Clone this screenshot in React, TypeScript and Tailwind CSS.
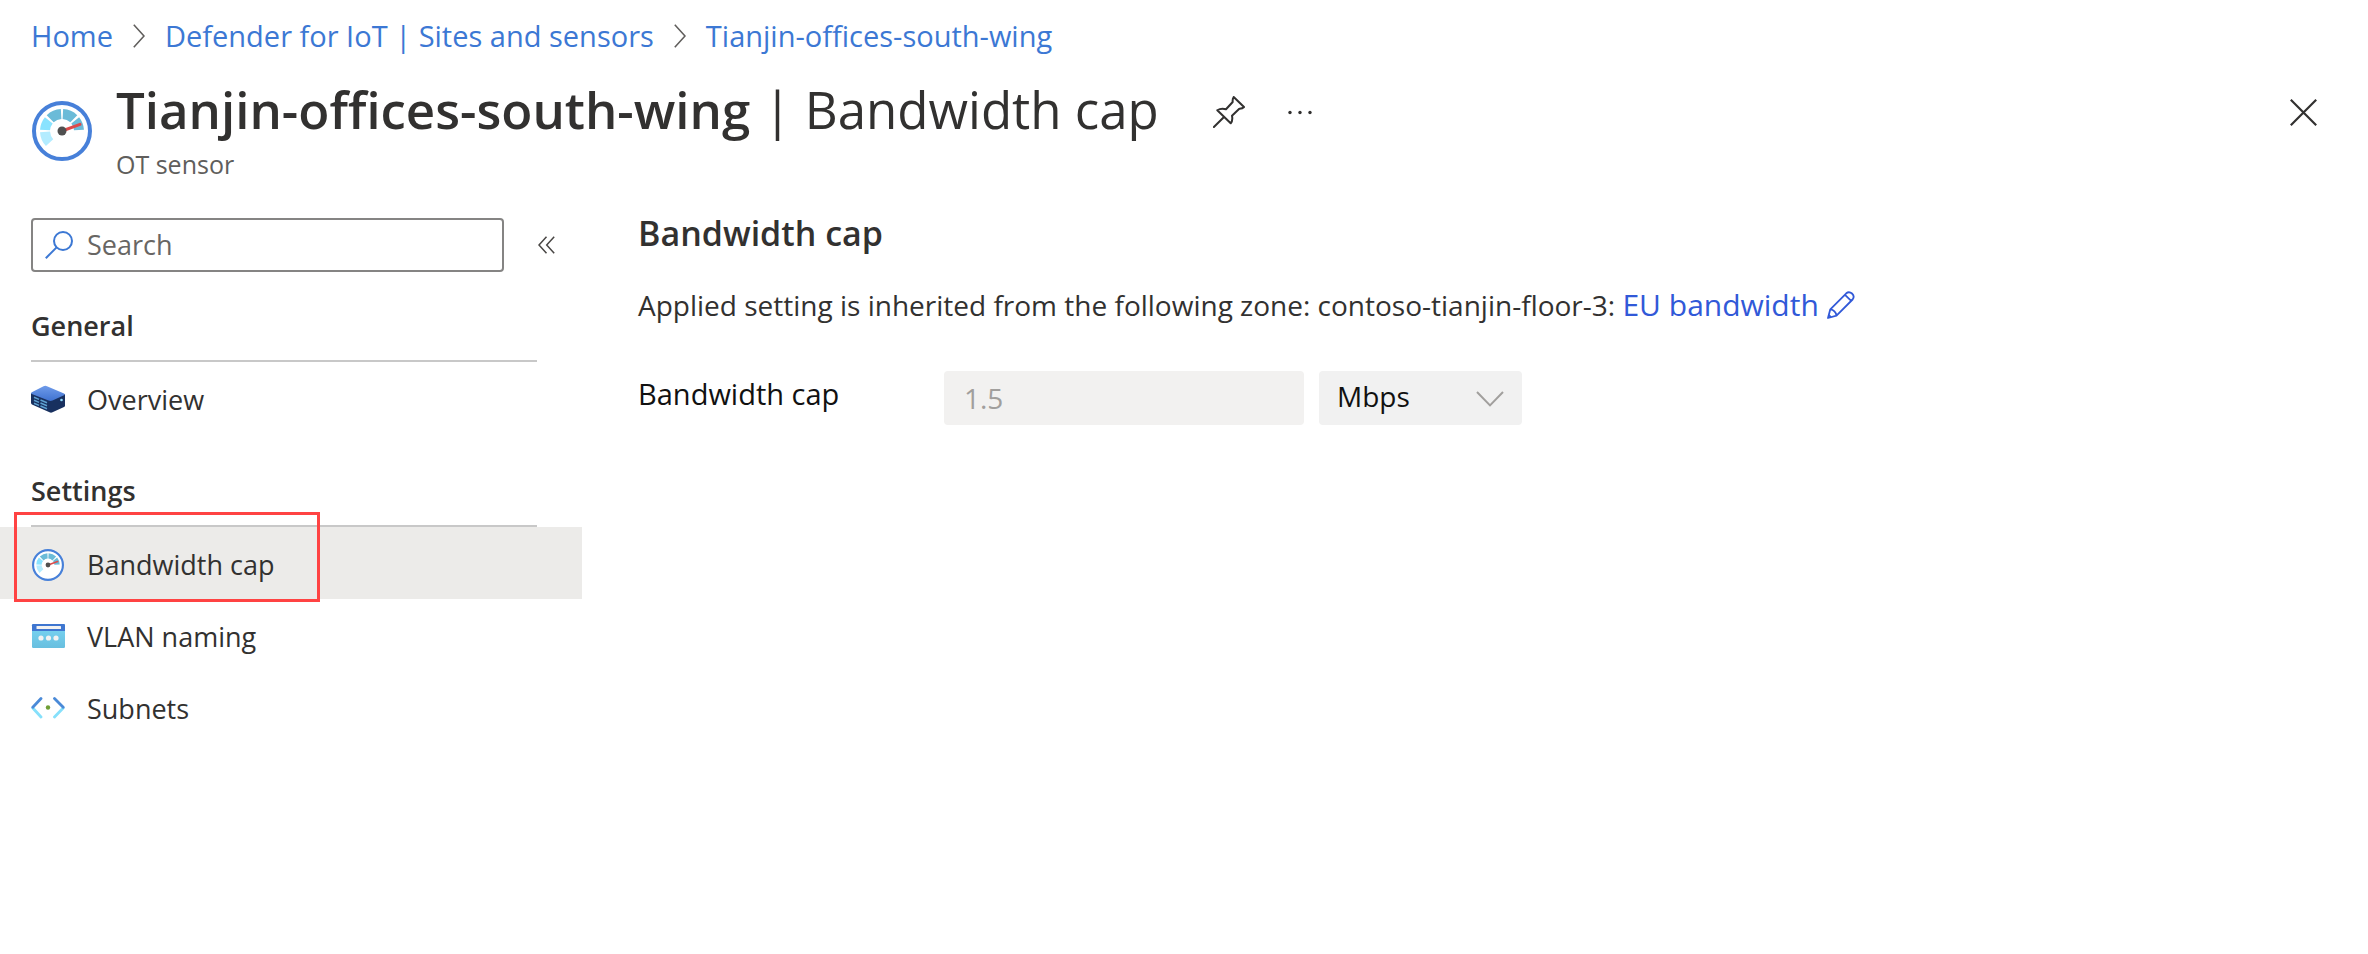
import type { ReactNode } from 'react';

const ARCS: { color: string; from: number; to: number }[] = [
  { color: '#b3ecff', from: 223, to: 183 },
  { color: '#8ae3ff', from: 177, to: 141 },
  { color: '#6bbbd8', from: 134, to: 93 },
  { color: '#6bbbd8', from: 87, to: 46 },
  { color: '#6bbbd8', from: 39, to: 3 },
];

function arcPath(from: number, to: number, radius: number) {
  const point = (deg: number) => {
    const rad = (deg * Math.PI) / 180;
    return `${(30 + radius * Math.cos(rad)).toFixed(2)} ${(30 - radius * Math.sin(rad)).toFixed(2)}`;
  };
  return `M${point(from)}A${radius} ${radius} 0 0 1 ${point(to)}`;
}

function GaugeIcon({ className }: { className: string }) {
  return (
    <svg viewBox="0 0 60 60" className={className} fill="none" aria-hidden="true">
      <circle cx="30" cy="30" r="28" fill="#fff" stroke="#4780d9" strokeWidth="4" />
      {ARCS.map((arc) => (
        <path key={arc.from} d={arcPath(arc.from, arc.to, 17)} stroke={arc.color} strokeWidth="10" />
      ))}
      <path d="M30 30L48 23.4" stroke="#dd4a4a" strokeWidth="3" strokeLinecap="round" />
      <circle cx="30" cy="30" r="4.5" fill="#505050" />
    </svg>
  );
}

function ServerIcon({ className }: { className: string }) {
  return (
    <svg viewBox="0 0 34 34" className={className} fill="none" aria-hidden="true">
      <defs>
        <linearGradient id="server-top" x1="0" y1="0" x2="0" y2="1">
          <stop offset="0" stopColor="#6f9bea" />
          <stop offset="1" stopColor="#3f72d0" />
        </linearGradient>
      </defs>
      <path d="M0 10L20 16L34 11V22.500Q34 23.500 33 24L21.500 29.300Q20 30 18.500 29.300L1.500 21.700Q0 21 0 19.700Z" fill="#18305f" />
      <path d="M.8 9.300L12.500 3.300Q14.300 2.500 16 3.200L33 10.400Q34.600 11.300 33 12.200L21.500 17.600Q19.500 18.500 17.500 17.600L.8 11Q-.6 10.200.8 9.300Z" fill="url(#server-top)" />
      <path d="M3 14.200L8 16.400M3 17.200L8 19.400M3 20.200L8 22.400M9.500 17L16 19.800M9.500 20L16 22.800M9.500 23L16 25.800" stroke="#5ea0d0" strokeWidth="1.500" />
      <circle cx="30.500" cy="17" r="1.300" fill="#8fdcff" />
    </svg>
  );
}

function VlanIcon({ className }: { className: string }) {
  return (
    <svg viewBox="0 0 34 34" className={className} fill="none" aria-hidden="true">
      <defs>
        <linearGradient id="vlan-body" x1="0" y1="0" x2="0" y2="1">
          <stop offset="0" stopColor="#7ad6f4" />
          <stop offset="1" stopColor="#68bfdf" />
        </linearGradient>
      </defs>
      <rect x="1" y="4" width="33" height="24" rx="1.200" fill="url(#vlan-body)" />
      <path d="M1 11V5.200Q1 4 2.200 4H32.800Q34 4 34 5.200V11Z" fill="#3f76d0" />
      <rect x="5.500" y="6" width="24.500" height="3" rx=".6" fill="#f2f2f2" />
      <circle cx="10" cy="18" r="2.600" fill="#f2f2f2" />
      <circle cx="17.500" cy="18" r="2.600" fill="#f2f2f2" />
      <circle cx="25" cy="18" r="2.600" fill="#f2f2f2" />
    </svg>
  );
}

function SubnetIcon({ className }: { className: string }) {
  return (
    <svg viewBox="0 0 34 34" className={className} fill="none" strokeWidth="2.800" strokeLinecap="round" aria-hidden="true">
      <path d="M1.800 16L10 25M32.200 16L23.500 25" stroke="#86e0fb" />
      <path d="M10 6.500L1.800 15.300M23.500 6.500L32.200 15.300" stroke="#4a8ad8" />
      <circle cx="17" cy="15.500" r="2.200" fill="#6f9e35" />
    </svg>
  );
}

function Crumb({ children }: { children: ReactNode }) {
  return (
    <a href="#" className="text-[#3c78d4]">
      {children}
    </a>
  );
}

function CrumbChevron() {
  return (
    <svg viewBox="0 0 12 24" className="h-6 w-3" fill="none" stroke="#605e5c" strokeWidth="1.600" aria-hidden="true">
      <path d="M.8.8L11 12L.8 23.200" />
    </svg>
  );
}

function NavSection({ title, children }: { title: string; children: ReactNode }) {
  return (
    <section>
      <h2 className="mr-[45px] ml-[31px] border-b-2 border-[#c8c8c8] pb-3.5 text-[27px] leading-10 font-semibold">{title}</h2>
      <ul>{children}</ul>
    </section>
  );
}

function NavItem({ icon, label, active }: { icon: ReactNode; label: string; active?: boolean }) {
  return (
    <li className="relative">
      <a
        href="#"
        aria-current={active ? 'page' : undefined}
        className={
          active
            ? 'flex h-[72px] items-center gap-[22px] bg-[#ecebe9] pt-1 pl-[31px] text-[27px]'
            : 'flex h-[72px] items-center gap-[22px] pt-1 pl-[31px] text-[27px]'
        }
      >
        {icon}
        {label}
      </a>
      {active && (
        <div className="pointer-events-none absolute -top-[15px] left-3.5 h-[90px] w-[306px] border-3 border-[#ff4343]" />
      )}
    </li>
  );
}

export default function App() {
  return (
    <div className="min-h-screen bg-white font-['Open_Sans',sans-serif] text-[#323130]">
      <nav aria-label="Breadcrumb" className="flex items-center gap-5 px-[31px] pt-4 text-[29px] leading-10">
        <Crumb>Home</Crumb>
        <CrumbChevron />
        <Crumb>Defender for IoT | Sites and sensors</Crumb>
        <CrumbChevron />
        <Crumb>Tianjin-offices-south-wing</Crumb>
      </nav>

      <header className="flex items-start pt-[21px] pr-[51px] pl-8">
        <GaugeIcon className="mt-6 size-[60px] shrink-0" />
        <div className="ml-6">
          <h1 className="text-[51px] leading-[64px]">
            <span className="font-semibold">Tianjin-offices-south-wing</span> | Bandwidth cap
          </h1>
          <p className="mt-[7px] text-[25px] leading-8 text-[#605e5c]">OT sensor</p>
        </div>
        <button type="button" aria-label="Pin" className="mt-[19px] ml-[54px]">
          <svg viewBox="0 0 32 32" className="size-8" fill="none" stroke="#323130" strokeWidth="2" strokeLinejoin="round" strokeLinecap="round">
            <path d="M20.700 1L31 11Q29.500 12.800 26.300 12.700L19 19.700Q20 24.500 17.700 27.300L4.300 14.300Q8 12 13 13.300L19.700 6Q19.300 3 20.700 1ZM11 21L.9 31" />
          </svg>
        </button>
        <button type="button" aria-label="More" className="mt-[19px] ml-[42px]">
          <svg viewBox="0 0 26 32" className="h-8 w-[26px]" fill="#323130">
            <circle cx="3" cy="16.500" r="1.700" />
            <circle cx="13" cy="16.500" r="1.700" />
            <circle cx="23" cy="16.500" r="1.700" />
          </svg>
        </button>
        <button type="button" aria-label="Close" className="mt-[22px] ml-auto">
          <svg viewBox="0 0 27 27" className="size-[27px]" fill="none" stroke="#323130" strokeWidth="2.200">
            <path d="M.8.8L26.200 26.200M26.200.8L.8 26.200" />
          </svg>
        </button>
      </header>

      <div className="flex items-start pt-[31px]">
        <aside className="w-[582px] shrink-0 pt-[7px]">
          <div className="flex items-center gap-[34px] pl-[31px]">
            <label className="flex h-[54px] w-[473px] items-center gap-3.5 rounded-sm border-2 border-[#858483] pl-3">
              <svg viewBox="0 0 28 28" className="size-7 shrink-0" fill="none" stroke="#3c78d4" strokeWidth="2" aria-hidden="true">
                <circle cx="18" cy="10" r="9" />
                <path d="M11.600 16.400L.8 27.200" />
              </svg>
              <input
                type="search"
                aria-label="Search"
                placeholder="Search"
                className="min-w-0 flex-1 bg-transparent text-[27px] outline-none placeholder:text-[#686664]"
              />
            </label>
            <button type="button" aria-label="Collapse menu">
              <svg viewBox="0 0 17 18" className="h-[18px] w-[17px]" fill="none" stroke="#484644" strokeWidth="1.500">
                <path d="M8.500.8L1 9L8.500 17.200M16.200.8L8.700 9L16.200 17.200" />
              </svg>
            </button>
          </div>
          <nav aria-label="Sensor" className="mt-[34px] flex flex-col gap-[37px]">
            <NavSection title="General">
              <NavItem icon={<ServerIcon className="size-[34px]" />} label="Overview" />
            </NavSection>
            <NavSection title="Settings">
              <NavItem icon={<GaugeIcon className="mx-px size-8" />} label="Bandwidth cap" active />
              <NavItem icon={<VlanIcon className="size-[34px]" />} label="VLAN naming" />
              <NavItem icon={<SubnetIcon className="size-[34px]" />} label="Subnets" />
            </NavSection>
          </nav>
        </aside>

        <main className="min-w-0 flex-1 pl-14">
          <h2 className="text-[34px] leading-[44px] font-semibold">Bandwidth cap</h2>
          <p className="mt-[30px] text-[28px] leading-10">
            Applied setting is inherited from the following zone: contoso-tianjin-floor-3:{' '}
            <a href="#" className="text-[30px] text-[#3159d8]">
              EU bandwidth
              <svg viewBox="0 0 28 28" className="mb-1.5 ml-2 inline size-7" fill="none" stroke="#3159d8" strokeWidth="1.800" strokeLinejoin="round" aria-hidden="true">
                <path d="M1 27L3.300 18.300L19.300 2.300Q22 0 25 2.500Q28 5.500 25.600 8.500L9.500 24.600ZM3.300 18.300Q8.500 19 9.500 24.600M18 3.800L24.200 9.900M1.700 23.800L4.200 26.300" />
              </svg>
            </a>
          </p>
          <div className="mt-[46px] flex items-center gap-[15px]">
            <label htmlFor="cap" className="w-[291px] pb-2 text-[29px] leading-10 text-[#111]">
              Bandwidth cap
            </label>
            <input
              id="cap"
              type="text"
              disabled
              defaultValue="1.5"
              className="h-[54px] w-[360px] rounded-sm bg-[#f2f1f0] px-5 text-[28px] text-[#a19f9d]"
            />
            <div className="relative">
              <select
                aria-label="Bandwidth unit"
                disabled
                className="h-[54px] w-[203px] appearance-none rounded-sm bg-[#f1f1f1] pb-1 pl-[18px] text-[28px] text-[#111] opacity-100"
              >
                <option>Mbps</option>
              </select>
              <svg viewBox="0 0 28 16" className="pointer-events-none absolute top-5 right-[18px] h-4 w-7" fill="none" stroke="#a19f9d" strokeWidth="2" aria-hidden="true">
                <path d="M1 1L14 14.400L27 1" />
              </svg>
            </div>
          </div>
        </main>
      </div>
    </div>
  );
}
